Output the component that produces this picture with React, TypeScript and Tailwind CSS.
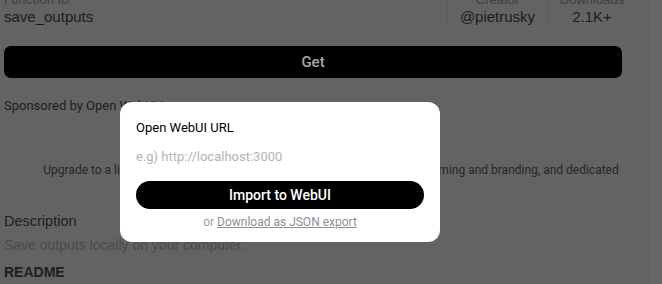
import React from "react";

export default function App() {
  return (
    <div
      className="relative w-[662px] h-[284px] overflow-hidden bg-[#636363] flex"
      style={{ fontFamily: "Roboto, 'Liberation Sans', sans-serif" }}
    >
      <div className="w-[648px] h-full px-[4px] flex flex-col">
        <div className="w-[618px] -mt-[9px] flex items-start justify-between">
          <div className="flex flex-col pt-[1px]">
            <div className="text-[13px] leading-[16px] text-[#3f3f3f]">Function ID</div>
            <div className="text-[15px] leading-[18px] text-[#1c1c1c] font-['Liberation_Sans']">save_outputs</div>
          </div>
          <div className="flex">
            <div className="border-l border-[#5c5c5c] w-[100px] h-[37px] flex flex-col items-center pt-[1px]">
              <div className="text-[13px] leading-[16px] text-[#3f3f3f] font-['Liberation_Sans']">Creator</div>
              <div className="text-[15px] leading-[18px] text-[#1c1c1c] font-['Liberation_Sans']">@pietrusky</div>
            </div>
            <div className="border-l border-[#5c5c5c] pl-[14px] w-[75px] h-[37px] flex flex-col items-center pt-[1px]">
              <div className="text-[13px] leading-[16px] text-[#3f3f3f] font-['Liberation_Sans'] whitespace-nowrap">Downloads</div>
              <div className="text-[15px] leading-[18px] text-[#1c1c1c] font-['Liberation_Sans']">2.1K+</div>
            </div>
          </div>
        </div>
        <div className="w-[618px] mt-[18px] h-[32px] rounded-[7px] bg-black flex items-center justify-center text-[15px] font-medium text-[#a8a8a8]">
          Get
        </div>
        <div className="mt-[20px] text-[13px] leading-[16px] text-[#1e1e1e]">
          Sponsored by Open WebUI Inc.
        </div>
        <div className="mt-[48px] w-[648px] -ml-[4px] pl-[27px] pr-[13px] text-center text-[12px] leading-[16px] text-[#262626]">
          Upgrade to a licensed plan for enhanced capabilities, including custom theming and branding, and dedicated support.
        </div>
        <div className="mt-[17px] text-[14.5px] leading-[20px] text-[#1e1e1e] font-['Liberation_Sans']">Description</div>
        <div className="mt-[4px] text-[14px] leading-[20px] text-[#4a4a4a] font-['Liberation_Sans']">
          Save outputs locally on your computer.
        </div>
        <div className="mt-[7px] text-[14px] leading-[20px] font-semibold text-[#1e1e1e] font-['Liberation_Sans']">README</div>
      </div>
      <div className="w-[14px] h-full bg-[#676767] border-l border-[#606060]" />

      <div className="absolute left-[120px] top-[102px] w-[320px] h-[140px] rounded-xl bg-white px-[16px] pt-[18px] flex flex-col">
        <div className="text-[13px] leading-[16px] text-black">Open WebUI URL</div>
        <div className="mt-[13px] text-[13px] leading-[16px] text-[#b3b3b3]">e.g) http://localhost:3000</div>
        <div className="mt-[16px] h-[28px] rounded-full bg-black flex items-center justify-center text-[14px] font-medium text-white">
          Import to WebUI
        </div>
        <div className="mt-[6px] text-center text-[12px] leading-[14px] text-[#9ca3af]">
          or <span className="underline text-[#8a8f99]">Download as JSON export</span>
        </div>
      </div>
    </div>
  );
}
